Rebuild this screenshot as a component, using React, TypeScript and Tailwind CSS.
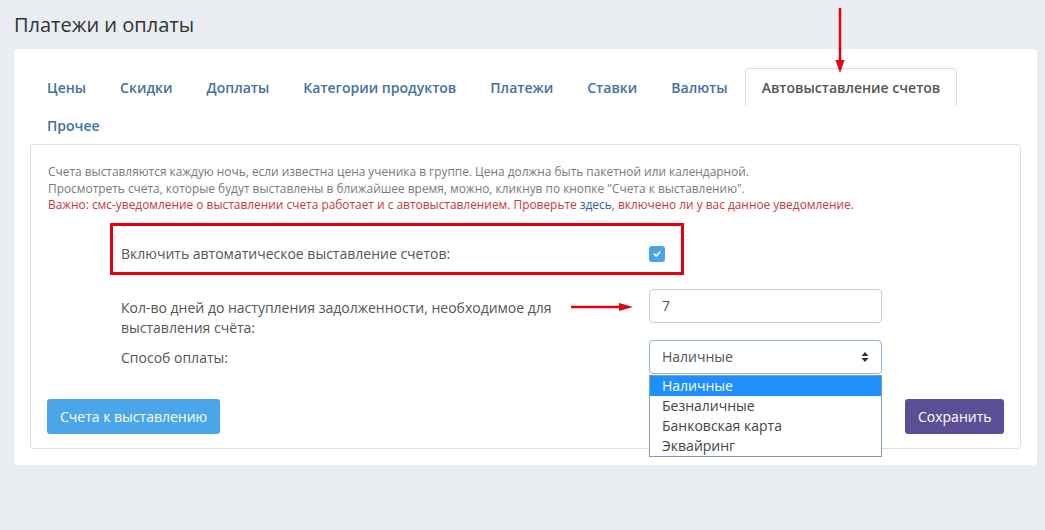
import React from "react";

const tabs = [
  "Цены",
  "Скидки",
  "Доплаты",
  "Категории продуктов",
  "Платежи",
  "Ставки",
  "Валюты",
  "Автовыставление счетов",
  "Прочее",
];

const options = ["Наличные", "Безналичные", "Банковская карта", "Эквайринг"];

export default function App() {
  return (
    <div
      className="relative w-[1045px] h-[530px] bg-[#e9ecf1] px-[14px] pt-[12px] overflow-hidden"
      style={{ fontFamily: '"Open Sans", "Noto Sans", sans-serif' }}
    >
      <h1 className="text-[20px] leading-[26px] text-[#333] font-normal">
        Платежи и оплаты
      </h1>

      <div className="mt-[11px] w-[1023px] bg-white rounded-[4px] px-[16px] pt-[19px] pb-[16px]">
        {/* tabs */}
        <ul className="flex flex-wrap">
          {tabs.map((t) => {
            const active = t === "Автовыставление счетов";
            return (
              <li
                key={t}
                className={
                  active
                    ? "h-[38px] px-[16px] flex items-center text-[14px] font-semibold text-[#555] border border-b-0 border-[#ddd] rounded-t-[4px] bg-white"
                    : "h-[38px] px-[17px] flex items-center text-[14px] font-semibold text-[#4470a3]"
                }
              >
                {t}
              </li>
            );
          })}
        </ul>

        {/* panel */}
        <div className="border border-[#ddd] rounded-[4px] rounded-tl-none px-[16px] pt-[18px] pb-[14px]">
          <div className="pl-[1px] text-[11.9px] leading-[16.5px] text-[#7a7a7a]">
            <p>
              Счета выставляются каждую ночь, если известна цена ученика в группе. Цена должна быть пакетной или календарной.
            </p>
            <p>
              Просмотреть счета, которые будут выставлены в ближайшее время, можно, кликнув по кнопке "Счета к выставлению".
            </p>
            <p className="text-[#c73a3a]">
              Важно: смс-уведомление о выставлении счета работает и с автовыставлением. Проверьте{" "}
              <span className="text-[#2a6496]">здесь</span>, включено ли у вас данное уведомление.
            </p>
          </div>

          {/* auto toggle */}
          <div className="mt-[10px] ml-[63px] w-[574px] h-[52px] border-[3px] border-[#e3000f] pl-[8px] pt-[18px]">
            <div className="flex items-center h-[20px]">
              <span className="w-[528px] text-[14px] leading-[20px] text-[#555]">
                Включить автоматическое выставление счетов:
              </span>
              <span className="w-[16px] h-[16px] rounded-[3px] bg-[#4ba3e3] flex items-center justify-center">
                <svg width="10" height="10" viewBox="0 0 10 10">
                  <path d="M2.2 5.2 L4.2 7.1 L7.9 3" stroke="white" strokeWidth="1.6" fill="none" strokeLinecap="round" strokeLinejoin="round" />
                </svg>
              </span>
            </div>
          </div>

          {/* days */}
          <div className="mt-[14px] ml-[74px] flex">
            <label className="w-[528px] pt-[9px] text-[14px] leading-[20px] text-[#555]">
              Кол-во дней до наступления задолженности, необходимое для
              <br />
              выставления счёта:
            </label>
            <div className="w-[233px] h-[34px] border border-[#ccc] rounded-[4px] px-[12px] flex items-center text-[14px] text-[#555]">
              7
            </div>
          </div>

          {/* payment method */}
          <div className="mt-[2px] ml-[74px] flex">
            <label className="w-[528px] pt-[8px] text-[14px] leading-[20px] text-[#555]">
              Способ оплаты:
            </label>
            <div className="relative">
              <div className="w-[233px] h-[34px] border border-[#8fb3dc] rounded-[4px] px-[12px] flex items-center justify-between text-[14px] text-[#555]">
                <span>Наличные</span>
                <svg width="8" height="12" viewBox="0 0 8 12">
                  <path d="M4 1 L7.5 5 H0.5 Z" fill="#333" />
                  <path d="M4 11 L7.5 7 H0.5 Z" fill="#333" />
                </svg>
              </div>
              <ul className="absolute left-0 top-[35px] w-[233px] bg-white border border-[#7f9db9] z-10">
                {options.map((o, i) => (
                  <li
                    key={o}
                    className={
                      i === 0
                        ? "h-[20px] px-[12px] text-[14px] leading-[20px] bg-[#1e8fff] text-white"
                        : "h-[20px] px-[12px] text-[14px] leading-[20px] text-[#444]"
                    }
                  >
                    {o}
                  </li>
                ))}
              </ul>
            </div>
          </div>

          {/* buttons */}
          <div className="mt-[25px] flex justify-between">
            <button className="h-[35px] px-[13px] rounded-[3px] bg-[#4aa6e8] text-white text-[14px]">
              Счета к выставлению
            </button>
            <button className="h-[35px] px-[12.5px] rounded-[3px] bg-[#5d4f97] text-white text-[14px]">
              Сохранить
            </button>
          </div>
        </div>
      </div>

      {/* annotation arrows */}
      <svg className="absolute left-[832px] top-[8px]" width="16" height="66" viewBox="0 0 16 66">
        <line x1="8" y1="0" x2="8" y2="54" stroke="#e3000f" strokeWidth="2.5" />
        <path d="M3.5 52 L12.5 52 L8 65 Z" fill="#e3000f" />
      </svg>
      <svg className="absolute left-[571px] top-[300px]" width="62" height="14" viewBox="0 0 62 14">
        <line x1="0" y1="7" x2="50" y2="7" stroke="#e3000f" strokeWidth="2.5" />
        <path d="M48 3 L48 11 L62 7 Z" fill="#e3000f" />
      </svg>
    </div>
  );
}
